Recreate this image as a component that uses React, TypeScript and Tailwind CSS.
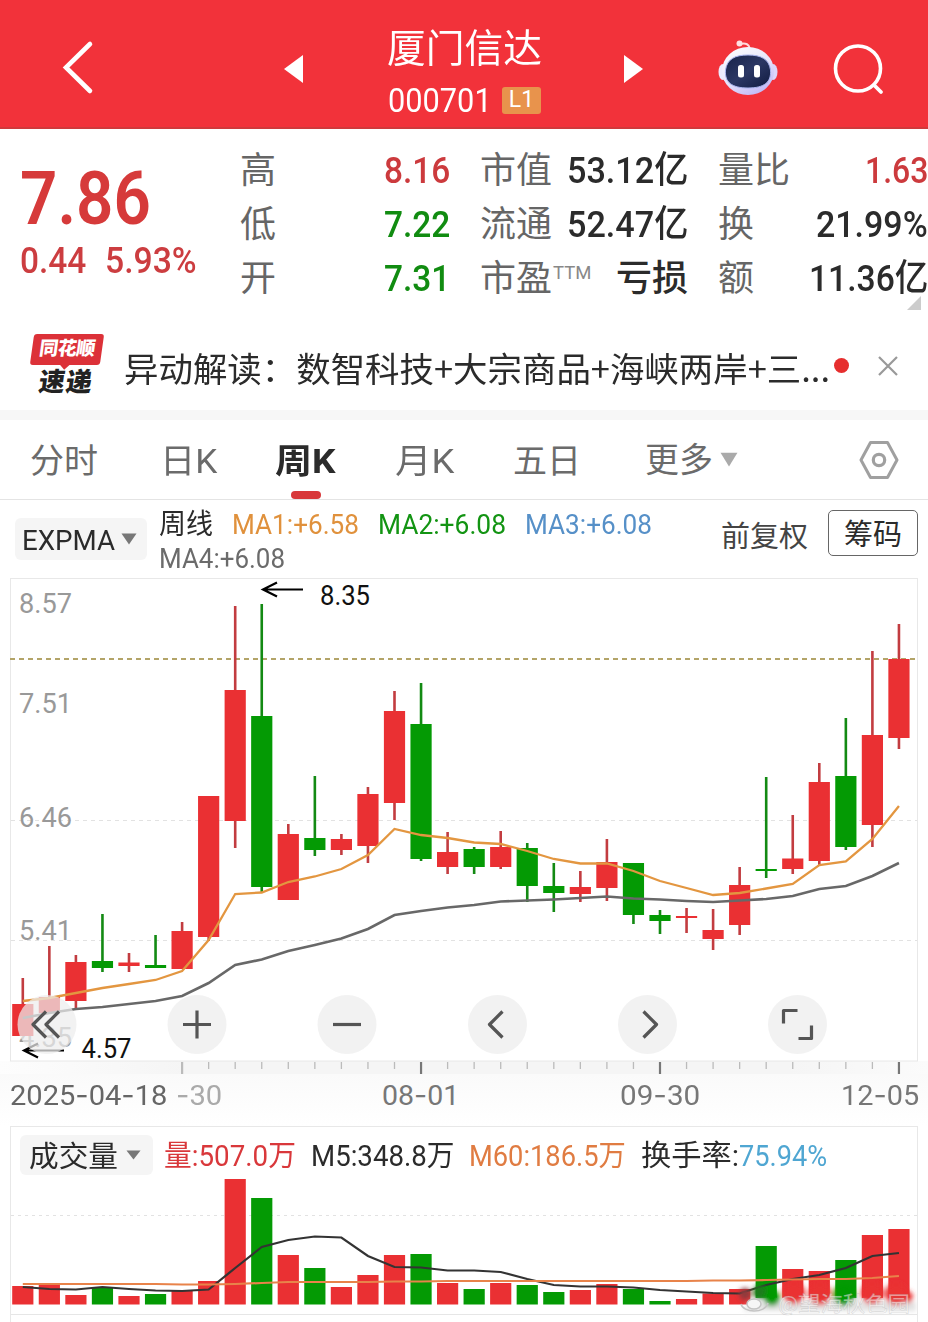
import { useLayoutEffect, useRef } from 'react';
import type { ReactNode } from 'react';
import clsx from 'clsx';

const RED = '#ea3033';
const GREEN = '#049a04';
const STEP = 26.55;
const FIRST_X = 22.8;

const xOf = (i: number) => FIRST_X + i * STEP;

// dir, high, low, body top, body bottom, volume top
type Candle = ['r' | 'g', number, number, number, number, number];

const CANDLES: Candle[] = [
  ['r', 978, 1036, 1004, 1036, 1286],
  ['r', 946, 1013, 997, 1013, 1284],
  ['r', 955, 1008, 962, 1001, 1295],
  ['g', 914, 972, 961, 968, 1288],
  ['r', 953, 972, 962.5, 966, 1296],
  ['g', 935, 968, 965, 968, 1294],
  ['r', 922, 969, 931, 969, 1290],
  ['r', 796, 941, 796, 937, 1281],
  ['r', 606, 848, 690, 821, 1179],
  ['g', 604, 892, 716, 887, 1198],
  ['r', 824, 900, 834, 900, 1255],
  ['g', 776, 856, 838, 850, 1268],
  ['r', 834, 855, 839, 850, 1287],
  ['r', 787, 863, 794, 846, 1275],
  ['r', 691, 820, 711, 803, 1255],
  ['g', 683, 861, 724, 859, 1254],
  ['r', 832, 874, 852, 867, 1283],
  ['g', 847, 874, 849, 867, 1289],
  ['r', 831, 869, 847, 867, 1283],
  ['g', 843, 902, 848, 886, 1285],
  ['g', 863, 912, 886, 893, 1292],
  ['r', 871, 902, 887, 894, 1290],
  ['r', 839, 901, 862, 888, 1284],
  ['g', 863, 924, 863, 915, 1289],
  ['g', 910, 934, 915, 921, 1301],
  ['r', 908, 933, 916, 918, 1299],
  ['r', 909, 950, 930, 939, 1293.5],
  ['r', 867, 935, 885, 925, 1289],
  ['g', 777, 878, 869, 871, 1246],
  ['r', 815, 874, 858.5, 869, 1269],
  ['r', 763, 866, 782, 861, 1271],
  ['g', 718, 850, 776, 847, 1260],
  ['r', 651, 847, 735, 825, 1235],
  ['r', 624, 749, 659, 738, 1229],
];

const MA_FAST = [
  1001, 998, 993, 988, 984, 980, 971, 940, 894, 892.5, 882, 876.5, 869, 855, 829, 835, 838, 842.5, 844, 851, 859,
  863.5, 863.5, 871, 881, 888, 895, 893, 888.5, 884, 865, 861.5, 839, 806,
];
const MA_SLOW = [
  1018, 1013, 1009, 1007, 1004, 1001, 996, 983, 965, 959.5, 951, 945, 938.5, 929, 915, 911, 907.5, 905, 901.5, 900.5,
  899.5, 898, 896.5, 898.5, 899.5, 901, 902, 900.5, 899, 896, 889, 886, 876, 863,
];
const VOL_M5 = [
  1287, 1289, 1289.5, 1287, 1289, 1290.5, 1291, 1289.5, 1268, 1247, 1240, 1236.5, 1237.5, 1256, 1267, 1267.5, 1270.5,
  1270.5, 1272, 1279, 1285, 1286.5, 1286.5, 1287.5, 1290, 1291.5, 1293, 1293.5, 1285, 1279, 1275, 1268, 1256, 1253,
];
const VOL_M60 = [
  1284, 1284, 1284, 1284, 1284, 1284, 1284.5, 1284.5, 1284, 1283, 1282, 1282, 1282, 1282, 1281.5, 1281.5, 1281, 1281,
  1281, 1281, 1281, 1281, 1281, 1281, 1281, 1281, 1280.5, 1280.5, 1280, 1279.5, 1279, 1279, 1278, 1276,
];

const toPoints = (ys: number[]) => ys.map((y, i) => `${xOf(i)},${y}`).join(' ');

/** Squeezes a single line of text into the width of its box. */
function Fit({ className, children }: { className?: string; children: ReactNode }) {
  const box = useRef<HTMLSpanElement>(null);
  const text = useRef<HTMLSpanElement>(null);
  useLayoutEffect(() => {
    if (!box.current || !text.current) return;
    text.current.style.transform = `scaleX(${box.current.clientWidth / text.current.offsetWidth})`;
  }, []);
  return (
    <span ref={box} className={clsx('block shrink-0 whitespace-nowrap', className)}>
      <span ref={text} className="inline-block origin-left">
        {children}
      </span>
    </span>
  );
}

function Caret({ className }: { className?: string }) {
  return (
    <svg viewBox="0 0 16 12" preserveAspectRatio="none" className={clsx('shrink-0', className)}>
      <path d="M0.5 0.5h15L8 11.5z" fill="currentColor" />
    </svg>
  );
}

function RobotIcon() {
  return (
    <svg viewBox="0 0 60 56" className="h-[56px] w-[60px]">
      <defs>
        <linearGradient id="shell" x1="0" y1="0" x2="0.6" y2="1">
          <stop offset="0" stopColor="#fff" />
          <stop offset="0.6" stopColor="#e6e4fb" />
          <stop offset="1" stopColor="#c4bcf7" />
        </linearGradient>
        <linearGradient id="visor" x1="0" y1="0" x2="1" y2="1">
          <stop offset="0" stopColor="#18234a" />
          <stop offset="0.5" stopColor="#2c3764" />
          <stop offset="1" stopColor="#101b40" />
        </linearGradient>
      </defs>
      <path d="M22 4q9-2 10 5" fill="none" stroke="#ffd9dc" strokeWidth="2" />
      <circle cx="21.500" cy="3.500" r="3" fill="#ffdfe2" />
      <ellipse cx="5" cy="32" rx="4.500" ry="8" fill="#eceafc" />
      <ellipse cx="55" cy="32" rx="4.500" ry="8" fill="#dcd6fa" />
      <ellipse cx="30" cy="31" rx="26" ry="24" fill="url(#shell)" />
      <path
        d="M30 15c13 0 21 4 22.500 15 1 12-6 18-22.500 18S6.500 42 7.500 30C9 19 17 15 30 15z"
        fill="url(#visor)"
        stroke="#a9b4ee"
        strokeWidth="1"
      />
      <rect x="20" y="25" width="6" height="12.500" rx="2.500" fill="#fff" />
      <rect x="36" y="25" width="6" height="12.500" rx="2.500" fill="#fff" />
    </svg>
  );
}

function Header() {
  return (
    <header className="flex h-[129px] items-start border-b-2 border-[#d0393b] bg-[#f2323a] text-white">
      <svg viewBox="0 0 32 56" className="mt-[39px] ml-[62px] h-[56px] w-[32px]">
        <path d="M28 5 L4 28.500 L28 52" fill="none" stroke="#fff" strokeWidth="4.600" strokeLinecap="round" />
      </svg>
      <svg viewBox="0 0 20 30" className="mt-[54px] ml-[190px] h-[30px] w-[20px]">
        <path d="M19 1v28L0 15z" fill="#fff" />
      </svg>
      <div className="ml-[83px] w-[156px] pt-[21px]">
        <Fit className="h-[55px] w-[155px] text-[39px] leading-[56px]">厦门信达</Fit>
        <div className="flex h-[48px] items-center">
          <Fit className="ml-[1px] w-[104px] text-[34px] leading-[48px]">000701</Fit>
          <span className="ml-[10px] flex h-[27px] w-[39px] items-center justify-center rounded-[3px] bg-[#e8934c] text-[23px]">
            L1
          </span>
        </div>
      </div>
      <svg viewBox="0 0 20 30" className="mt-[54px] ml-[80px] h-[30px] w-[20px]">
        <path d="M1 1v28l19-14z" fill="#fff" />
      </svg>
      <div className="mt-[40px] ml-[75px]">
        <RobotIcon />
      </div>
      <svg viewBox="0 0 52 52" className="mt-[44px] ml-[54px] h-[52px] w-[52px]">
        <circle cx="26" cy="24.500" r="22.500" fill="none" stroke="#fff" strokeWidth="3.600" />
        <path d="M42 41l7 7" stroke="#fff" strokeWidth="3.800" strokeLinecap="round" />
      </svg>
    </header>
  );
}

function Label({ className, children }: { className?: string; children: ReactNode }) {
  return <span className={clsx('text-[36px] text-[#666]', className)}>{children}</span>;
}

function Quote() {
  return (
    <section className="flex h-[191px] pt-[15px] text-[37px] leading-[54px]">
      <div className="ml-[20px] w-[220px] text-[#d63a3a]">
        <Fit className="mt-[20px] h-[70px] w-[131px] text-[74px] leading-[70px] font-semibold">7.86</Fit>
        <div className="flex gap-[19px] font-medium text-[#cc3d40]">
          <Fit className="w-[66px]">0.44</Fit>
          <Fit className="w-[92px]">5.93%</Fit>
        </div>
      </div>
      <div className="w-[210px]">
        <div className="flex justify-between">
          <Label>高</Label>
          <Fit className="w-[66px] font-medium text-[#cc3a3d]">8.16</Fit>
        </div>
        <div className="flex justify-between">
          <Label>低</Label>
          <Fit className="w-[66px] font-medium text-[#118c11]">7.22</Fit>
        </div>
        <div className="flex justify-between">
          <Label>开</Label>
          <Fit className="w-[66px] font-medium text-[#118c11]">7.31</Fit>
        </div>
      </div>
      <div className="ml-[30px] w-[208px] text-[#2b2b2b]">
        <div className="flex justify-between">
          <Label>市值</Label>
          <Fit className="w-[121px] font-medium">53.12亿</Fit>
        </div>
        <div className="flex justify-between">
          <Label>流通</Label>
          <Fit className="w-[121px] font-medium">52.47亿</Fit>
        </div>
        <div className="flex justify-between">
          <div className="flex">
            <Label>市盈</Label>
            <span className="-mt-[6px] ml-px text-[18.500px] text-[#888]">TTM</span>
          </div>
          <span className="text-[36px] font-medium">亏损</span>
        </div>
      </div>
      <div className="ml-[30px] w-[210px] text-[#2b2b2b]">
        <div className="flex justify-between">
          <Label>量比</Label>
          <Fit className="w-[63px] font-medium text-[#cc3a3d]">1.63</Fit>
        </div>
        <div className="flex justify-between">
          <Label>换</Label>
          <Fit className="w-[112px] font-medium">21.99%</Fit>
        </div>
        <div className="flex justify-between">
          <Label>额</Label>
          <Fit className="w-[119px] font-medium">11.36亿</Fit>
        </div>
        <svg viewBox="0 0 14 14" className="mt-[-10px] mr-[7px] ml-auto h-[14px] w-[14px]">
          <path d="M14 0v14H0z" fill="#ccc" />
        </svg>
      </div>
    </section>
  );
}

function NewsBar() {
  return (
    <section className="flex h-[90px] items-center">
      <div className="ml-[30px] flex w-[73px] flex-col items-center font-black">
        <div className="relative flex h-[31px] w-[70px] -skew-x-[8deg] items-center justify-center rounded-[3px] bg-[#dc3138] text-[19px] tracking-[-0.500px] text-white">
          同花顺
          <span className="absolute -bottom-[3px] left-[31px] h-[8px] w-[8px] rotate-45 bg-[#dc3138]" />
        </div>
        <div className="mt-[3px] -skew-x-[8deg] text-[26px] leading-[28px] tracking-[1px] text-[#222]">速递</div>
      </div>
      <Fit className="mt-[4px] ml-[21px] w-[706px] font-['Noto_Sans_CJK_SC',sans-serif] text-[34px] text-[#2b2b2b]">
        异动解读：数智科技+大宗商品+海峡两岸+三...
      </Fit>
      <span className="ml-[4px] h-[15px] w-[15px] rounded-full bg-[#e62e2e]" />
      <svg viewBox="0 0 20 20" className="mt-[2px] ml-[29px] h-[20px] w-[20px]">
        <path d="M1 1l18 18M19 1L1 19" stroke="#999" strokeWidth="2.200" />
      </svg>
    </section>
  );
}

function Tabs() {
  return (
    <nav className="flex h-[80px] border-b border-[#e4e4e4] pl-[30px] text-[34px] leading-[82px] text-[#6b6b6b]">
      <span className="w-[130px]">分时</span>
      <span className="w-[115px]">
        <Fit className="w-[57px]">日K</Fit>
      </span>
      <span className="relative w-[120px] font-bold text-[#2b2b2b]">
        <Fit className="w-[61px]">周K</Fit>
        <span className="absolute bottom-[0px] left-[16px] h-[8px] w-[30px] rounded-full bg-[#d8383a]" />
      </span>
      <span className="w-[118px]">
        <Fit className="w-[59px]">月K</Fit>
      </span>
      <span className="w-[132px]">五日</span>
      <span className="flex w-[213px] items-center">
        更多
        <Caret className="ml-[7px] h-[15px] w-[18px] text-[#aaa]" />
      </span>
      <svg viewBox="0 0 42 40" className="mt-[20px] h-[40px] w-[42px]">
        <path
          d="M12.500 2.500h17L39 20l-9.500 17.500h-17L3 20z"
          fill="none"
          stroke="#a0a0a0"
          strokeWidth="3"
          strokeLinejoin="round"
        />
        <circle cx="21" cy="20" r="5.700" fill="none" stroke="#a0a0a0" strokeWidth="3.200" />
      </svg>
    </nav>
  );
}

function IndicatorBar() {
  return (
    <section className="flex h-[78px] items-start text-[28px] leading-[34px]">
      <div className="mt-[18px] ml-[15px] flex h-[42px] w-[132px] items-center rounded-[6px] bg-[#f5f5f5] text-[#2b2b2b]">
        <Fit className="mt-[3px] ml-[7px] w-[93px]">EXPMA</Fit>
        <Caret className="ml-[6px] h-[12px] w-[16px] text-[#777]" />
      </div>
      <div className="mt-[8px] ml-[12px] w-[562px]">
        <div className="flex">
          <Fit className="w-[54px] text-[#2b2b2b]">周线</Fit>
          <Fit className="ml-[19px] w-[127px] text-[#e0913c]">MA1:+6.58</Fit>
          <Fit className="ml-[19px] w-[128px] text-[#139413]">MA2:+6.08</Fit>
          <Fit className="ml-[19px] w-[127px] text-[#5690c8]">MA3:+6.08</Fit>
        </div>
        <Fit className="w-[126px] text-[#6b6b6b]">MA4:+6.08</Fit>
      </div>
      <span className="mt-[20px] w-[88px] text-[29px] text-[#444]">前复权</span>
      <span className="mt-[10px] ml-[19px] flex h-[46px] w-[90px] items-center justify-center rounded-[5px] border border-[#666] pt-[3px] text-[29px] text-[#2b2b2b]">
        筹码
      </span>
    </section>
  );
}

function ScaleLabel({ x, y, w, fill, children }: { x: number; y: number; w: number; fill: string; children: string }) {
  return (
    <text x={x} y={y} fontSize="28.500" fill={fill} textLength={w} lengthAdjust="spacingAndGlyphs">
      {children}
    </text>
  );
}

function RoundButton({ x, d }: { x: number; d: string }) {
  return (
    <g transform={`translate(${x} 1024.5)`}>
      <circle r="29.500" fill="#ededed" fillOpacity="0.720" />
      <path d={d} fill="none" stroke="#555" strokeWidth="3.200" strokeLinejoin="round" />
    </g>
  );
}

function KLineChart() {
  return (
    <svg viewBox="0 578 928 496" className="block h-[496px] w-[928px]">
      <defs>
        <linearGradient id="axisShade" x1="0" y1="0" x2="1" y2="0">
          <stop offset="0" stopColor="#fdfdfd" />
          <stop offset="0.2" stopColor="#f5f5f5" />
          <stop offset="0.850" stopColor="#f5f5f5" />
          <stop offset="1" stopColor="#fbfbfb" />
        </linearGradient>
      </defs>
      <rect x="0" y="1061" width="928" height="13" fill="url(#axisShade)" />
      <rect x="10.500" y="578.500" width="907" height="482.500" fill="none" stroke="#e8e8e8" />
      <path d="M11 820.500H917M11 940.500H917" stroke="#e2e2e2" strokeDasharray="4 4" />
      <ScaleLabel x={19} y={613} w={53} fill="#999">8.57</ScaleLabel>
      <ScaleLabel x={19} y={713} w={53} fill="#999">7.51</ScaleLabel>
      <ScaleLabel x={19} y={827} w={53} fill="#999">6.46</ScaleLabel>
      <ScaleLabel x={19} y={940} w={53} fill="#999">5.41</ScaleLabel>
      <ScaleLabel x={19} y={1047} w={53} fill="#999">4.35</ScaleLabel>

      <path d="M10 659H917" stroke="#b3a468" strokeWidth="1.800" strokeDasharray="5 4" />
      {CANDLES.map(([dir, high, low, top, bottom], i) => {
        const x = xOf(i);
        return (
          <g key={i} fill={dir === 'r' ? RED : GREEN}>
            <rect x={x - 1.3} y={high} width="2.600" height={low - high} fill={dir === 'r' ? '#c23c40' : '#138a13'} />
            <rect x={x - 10.6} y={top} width="21.200" height={bottom - top} />
          </g>
        );
      })}
      <polyline points={toPoints(MA_SLOW)} fill="none" stroke="#686868" strokeWidth="2.600" />
      <polyline points={toPoints(MA_FAST)} fill="none" stroke="#e39640" strokeWidth="2.300" />

      <path d="M303 589.500H263M277 582.500L263 589.500L277 596.500" fill="none" stroke="#000" strokeWidth="2.200" />
      <ScaleLabel x={320} y={604.5} w={50} fill="#111">8.35</ScaleLabel>
      <path d="M64 1050.500H24M38 1043.500L24 1050.500L38 1057.500" fill="none" stroke="#000" strokeWidth="2.200" />
      <ScaleLabel x={81.5} y={1058} w={50} fill="#111">4.57</ScaleLabel>

      <RoundButton x={47} d="M-1-13L-14 0L-1 13M12-13L-1 0L12 13" />
      <RoundButton x={197} d="M-14 0H14M0-14V14" />
      <RoundButton x={347} d="M-14 0H14" />
      <RoundButton x={497.5} d="M5-13L-8 0L5 13" />
      <RoundButton x={647.5} d="M-4-13L9 0L-4 13" />
      <RoundButton x={797.5} d="M-14-1V-14H0M14 1V14H1" />

      {CANDLES.map((_, i) => {
        if (i < 6) return null;
        const major = (i - 6) % 9 === 0;
        return (
          <path
            key={i}
            d={`M${xOf(i)} 1062V${major ? 1074 : 1069}`}
            stroke={major && i > 6 ? '#777' : '#bbb'}
            strokeWidth={major ? 2.2 : 1.3}
          />
        );
      })}
    </svg>
  );
}

function DateText({ value }: { value: string }) {
  return value.split('-').map((part, i) => (
    <span key={i}>
      {i > 0 && <span className="font-['Inter']">-</span>}
      {part}
    </span>
  ));
}

function DateAxis() {
  return (
    <div className="flex h-[52px] bg-linear-to-b from-[#fafafa] to-white pl-[10px] text-[28.500px] leading-[42px] text-[#777]">
      <Fit className="w-[157px] text-[#666]">
        <DateText value="2025-04-18" />
      </Fit>
      <Fit className="ml-[9px] w-[46px] text-[#aaa]">
        <DateText value="-30" />
      </Fit>
      <Fit className="ml-[160px] w-[77px]">
        <DateText value="08-01" />
      </Fit>
      <Fit className="ml-[161px] w-[80px]">
        <DateText value="09-30" />
      </Fit>
      <Fit className="ml-[141px] w-[78px]">
        <DateText value="12-05" />
      </Fit>
    </div>
  );
}

function VolumeChart() {
  return (
    <svg viewBox="11 1178 906 144" className="block h-[144px] w-[906px]">
      <defs>
        <filter id="smudge" x="-10%" y="-40%" width="120%" height="180%">
          <feGaussianBlur stdDeviation="2.500" />
        </filter>
      </defs>
      <path d="M11 1215.500H917" stroke="#e2e2e2" strokeDasharray="3 4" />
      {CANDLES.map(([dir, , , , , top], i) => (
        <rect
          key={i}
          x={xOf(i) - 10.6}
          y={top}
          width="21.200"
          height={(i < 28 ? 1304.5 : 1298) - top}
          fill={dir === 'r' ? RED : GREEN}
        />
      ))}
      <polyline points={toPoints(VOL_M5)} fill="none" stroke="#333" strokeWidth="2.200" />
      <polyline points={toPoints(VOL_M60)} fill="none" stroke="#e8834a" strokeWidth="2.200" />

      <g filter="url(#smudge)">
        <path d="M752 1302H916V1311H742z" fill="#e2e2e2" />
        <circle cx="745" cy="1294" r="6" fill="#8d3a3c" />
        <circle cx="760" cy="1292" r="7" fill="#1c7c1c" />
        <circle cx="772" cy="1298" r="8" fill={GREEN} />
        <circle cx="794" cy="1293" r="11" fill={RED} />
        <circle cx="820" cy="1294" r="11" fill={RED} />
        <circle cx="844" cy="1295" r="11" fill={GREEN} />
        <circle cx="872" cy="1293" r="11" fill={RED} />
        <circle cx="896" cy="1294" r="11" fill={RED} />
        <circle cx="907" cy="1297" r="6" fill={RED} />
      </g>
      <path d="M11 1314.500H917" stroke="#e6e6e6" />
      <g fill="none" stroke="#c4c4c4" strokeWidth="1.500">
        <path d="M741 1304c2 9 24 10 27-1" />
        <ellipse cx="754" cy="1304" rx="7" ry="5" fill="#f6f6f6" />
      </g>
      <text
        x="778"
        y="1311"
        fontSize="21"
        fill="#fff"
        fillOpacity="0.500"
        stroke="#999"
        strokeOpacity="0.300"
        strokeWidth="0.700"
        textLength="132"
        lengthAdjust="spacingAndGlyphs"
      >
        @望海秋色园
      </text>
    </svg>
  );
}

function VolumePanel() {
  return (
    <section className="mx-[10px] h-[196px] border-x border-t border-[#e8e8e8]">
      <div className="flex h-[51px] items-start pt-[8px] text-[29px] leading-[42px] text-[#2b2b2b]">
        <div className="ml-[9px] flex h-[40px] w-[133px] items-center rounded-[6px] bg-[#f5f5f5]">
          <Fit className="mt-[3px] ml-[9px] w-[89px]">成交量</Fit>
          <Caret className="ml-[8px] h-[10px] w-[15px] text-[#777]" />
        </div>
        <Fit className="ml-[11px] w-[132px] text-[#d9383b]">量:507.0万</Fit>
        <Fit className="ml-[15px] w-[143px]">M5:348.8万</Fit>
        <Fit className="ml-[15px] w-[157px] text-[#e07c42]">M60:186.5万</Fit>
        <Fit className="ml-[15px] w-[98px]">换手率:</Fit>
        <Fit className="w-[88px] text-[#4fa6d2]">75.94%</Fit>
      </div>
      <VolumeChart />
    </section>
  );
}

export default function App() {
  return (
    <div className="h-[1322px] w-[928px] overflow-hidden bg-white font-['Roboto','Noto_Sans_CJK_SC',sans-serif]">
      <Header />
      <Quote />
      <NewsBar />
      <div className="h-[10px] bg-[#f7f7f7]" />
      <Tabs />
      <IndicatorBar />
      <KLineChart />
      <DateAxis />
      <VolumePanel />
    </div>
  );
}
